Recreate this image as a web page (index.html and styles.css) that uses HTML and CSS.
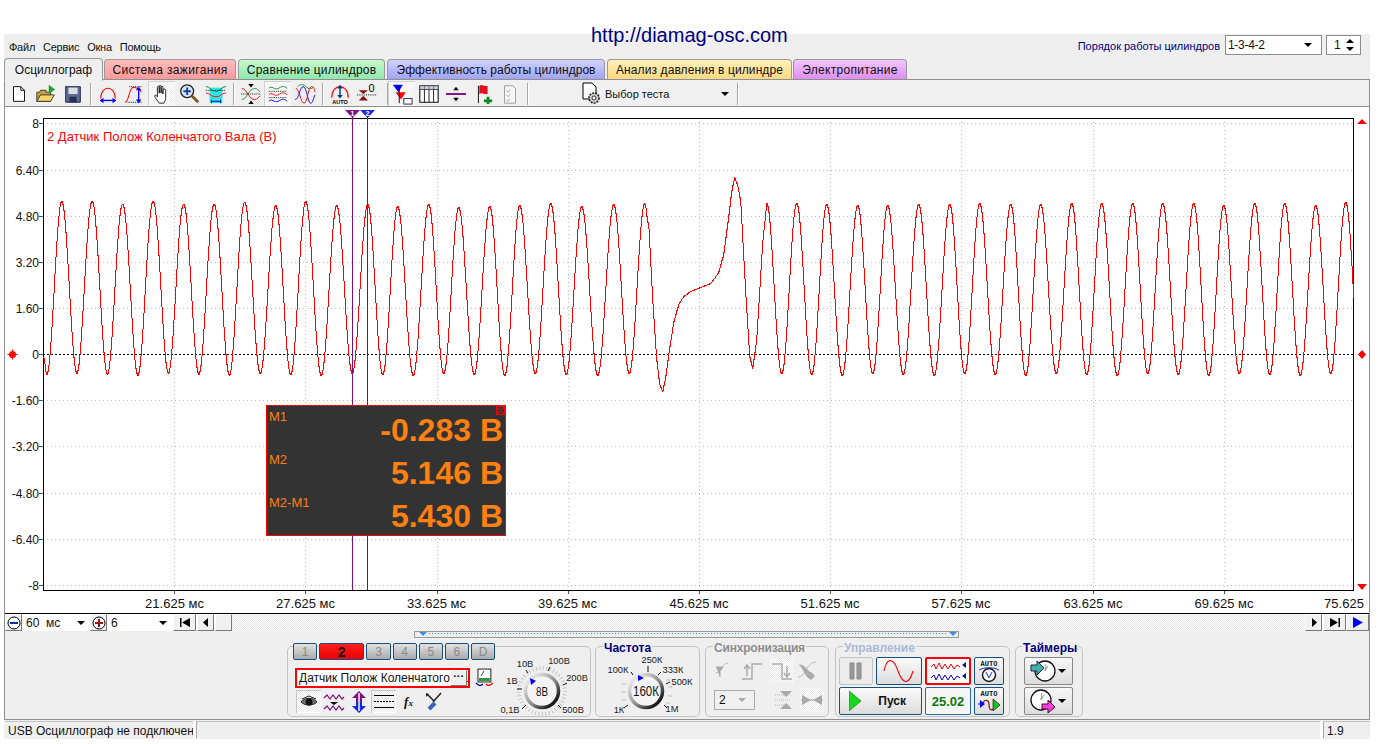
FILE: index.html
```html
<!DOCTYPE html>
<html lang="ru">
<head>
<meta charset="utf-8">
<title>Осциллограф</title>
<link rel="stylesheet" href="styles.css">
</head>
<body>
<div class="url">http://diamag-osc.com</div>
<div class="app">
  <div class="menubar">
    <span class="menu-item">Файл</span><span class="menu-item">Сервис</span><span class="menu-item">Окна</span><span class="menu-item">Помощь</span>
    <div class="order">
      <span class="order-label">Порядок работы цилиндров</span>
      <div class="combo order-combo"><span>1-3-4-2</span><i class="caret"></i></div>
      <div class="combo order-spin"><span>1</span><svg width="10" height="14" viewBox="0 0 10 14"><path d="M1 5l4-4 4 4zM1 9l4 4 4-4z" fill="#000"/></svg></div>
    </div>
  </div>
  <div class="tabs">
    <div class="tab active">Осциллограф</div>
    <div class="tab t-red">Система зажигания</div>
    <div class="tab t-green">Сравнение цилиндров</div>
    <div class="tab t-blue">Эффективность работы цилиндров</div>
    <div class="tab t-yellow">Анализ давления в цилиндре</div>
    <div class="tab t-purple">Электропитание</div>
  </div>
  <div class="page">
    <div class="toolbar">
      <div class="tool"><svg viewBox="0 0 24 24"><path d="M6 4h8l4 4v12H6z" fill="#fff" stroke="#000"/><path d="M14 4v4h4" fill="none" stroke="#000"/></svg></div>
      <div class="tool"><svg viewBox="0 0 24 24"><path d="M2 20V10h3l1-2h6v2h5v10z" fill="#c9a235" stroke="#333"/><path d="M2 20l4-7h15l-4 7z" fill="#f5d56a" stroke="#333"/><path d="M15 2l7 5-7 5z" fill="#1fa32c"/></svg></div>
      <div class="tool"><svg viewBox="0 0 24 24"><path d="M4 4h16v17H4z" fill="#5c6a9c" stroke="#1d2340"/><path d="M7 5h10v7H7z" fill="#ddd"/><path d="M8 15h8v6H8z" fill="#26304f"/></svg></div>
      <i class="sep"></i>
      <div class="tool"><svg viewBox="0 0 24 24"><path d="M4 17C4 2 20 2 20 17" fill="none" stroke="#f00" stroke-width="1.2"/><path d="M4 19h16" stroke="#00f" stroke-width="1.5"/><path d="M3 19l4-3v6zM21 19l-4-3v6z" fill="#00f"/></svg></div>
      <div class="tool"><svg viewBox="0 0 24 24"><path d="M1 21c5 0 4-16 9-16 3 0 7 1 9 5" fill="none" stroke="#f00" stroke-width="1.1"/><path d="M6 4h14M4 21h16" stroke="#000" stroke-dasharray="1 1"/><path d="M16 6v14" stroke="#00f" stroke-width="1.5"/><path d="M16 4l3 4h-6zM16 22l3-4h-6z" fill="#00f"/></svg></div>
      <div class="tool on"><svg viewBox="0 0 24 24"><path d="M9 22c-2-3-5-6-5-8 0-1 2-1 3 1V5c0-2 2-2 2 0v6V4c0-2 2-2 2 0v7V5c0-2 2-2 2 0v7V8c0-2 3-2 3 0v8c0 3-1 4-2 6z" fill="#fff" stroke="#000" stroke-width=".9"/></svg></div>
      <div class="tool"><svg viewBox="0 0 24 24"><circle cx="10" cy="9" r="7" fill="#dbe6f5" stroke="#222" stroke-width="1.4"/><path d="M10 5v8M6 9h8" stroke="#14409a" stroke-width="2"/><path d="M15 14l7 7" stroke="#7a5a20" stroke-width="3"/></svg></div>
      <div class="tool"><svg viewBox="0 0 24 24"><path d="M5 5h14v17H5z" fill="#2fe5e8"/><path d="M1 4c5 0 5 5 11 5s5-5 11-5" fill="none" stroke="#0a7a20"/><path d="M1 11c5 0 5 4 11 4s5-4 11-4" fill="none" stroke="#f00"/><path d="M1 8h22" stroke="#000" stroke-dasharray="1 1"/><path d="M7 20h10M7 18v4M17 18v4" stroke="#00a"/></svg></div>
      <i class="sep"></i>
      <div class="tool"><svg viewBox="0 0 24 24"><path d="M2 6c6 0 7 12 14 12 3 0 4-2 6-4" fill="none" stroke="#e00"/><path d="M2 18c6 0 7-12 14-12 3 0 4 2 6 4" fill="none" stroke="#1a9a30"/><path d="M1 12h22" stroke="#000" stroke-dasharray="1 1"/><path d="M9 1h6l-3 4zM9 23h6l-3-4z" fill="#000"/></svg></div>
      <div class="tool on"><svg viewBox="0 0 24 24"><path d="M2 6c3-4 6 2 10 0s6-4 10 0" fill="none" stroke="#0a8a20"/><path d="M2 13c3-4 6 2 10 0s6-4 10 0" fill="none" stroke="#f00"/><path d="M2 20c3-4 6 2 10 0s6-4 10 0" fill="none" stroke="#00f"/><path d="M2 9h20M2 16h20" stroke="#000" stroke-dasharray="1 1"/></svg></div>
      <div class="tool"><svg viewBox="0 0 24 24"><path d="M1 18C6 18 6 4 10 4s5 18 8 18 3-6 5-9" fill="none" stroke="#00f"/><path d="M2 6c4 0 5 16 9 16s4-18 8-18 3 4 4 6" fill="none" stroke="#f00"/><path d="M4 4c3-3 6-3 9 0s6 3 9 0" fill="none" stroke="#1a9a30"/></svg></div>
      <i class="sep"></i>
      <div class="tool"><svg viewBox="0 0 24 24"><path d="M3 16C3 0 21 0 21 16" fill="none" stroke="#f00" stroke-width="1.2"/><path d="M12 4v11" stroke="#00368a" stroke-width="1.5"/><path d="M12 2l3 4H9zM12 17l3-4H9z" fill="#00368a"/><text x="12" y="23" class="auto-mini">AUTO</text></svg></div>
      <div class="tool"><svg viewBox="0 0 24 24"><path d="M1 13h22" stroke="#000" stroke-dasharray="1 1"/><path d="M3 8h10l-5 4zM3 19h10l-5-5z" fill="#8a1010"/><text x="17" y="10" class="zero-mini">0</text></svg></div>
      <i class="sep sep-wide"></i>
      <div class="tool on"><svg viewBox="0 0 24 24"><path d="M2 2h11l-5 8z" fill="#00f"/><path d="M5 10h11l-5 8z" fill="#f00"/><path d="M9 3v19" stroke="#000"/><rect x="14" y="17" width="9" height="6" fill="#fff" stroke="#223"/></svg></div>
      <div class="tool"><svg viewBox="0 0 24 24"><path d="M2 3h20v18H2z" fill="#fff" stroke="#111" stroke-width="1.2"/><path d="M2 7h20M7 3v18M12 3v18M17 3v18" stroke="#111"/><path d="M2 3h20v4H2z" fill="#aab3c8" opacity=".6"/></svg></div>
      <div class="tool"><svg viewBox="0 0 24 24"><path d="M1 12h22" stroke="#80007f" stroke-width="2"/><path d="M9 8h6l-3-4zM9 16h6l-3 4z" fill="#000"/></svg></div>
      <div class="tool"><svg viewBox="0 0 24 24"><path d="M7 3v19" stroke="#000"/><path d="M8 3c3-2 5 1 9 0v9c-4 1-6-2-9 0z" fill="#e01020"/><path d="M16 15h3v3h3v3h-3v2h-3v-2h-3v-3h3z" fill="#0a8a20"/></svg></div>
      <div class="tool"><svg viewBox="0 0 24 24"><path d="M6 3h9l3 3v16H6z" fill="#f6f6f6" stroke="#999"/><path d="M8 8l2 2 2-3M8 13l2 2 2-3M8 18l2 2 2-3" fill="none" stroke="#aaa"/></svg></div>
      <i class="sep"></i>
      <div class="test-select">
        <svg width="24" height="24" viewBox="0 0 24 24"><path d="M3 1h9l4 4v12H3z" fill="#fff" stroke="#000"/><circle cx="14" cy="16" r="5" fill="#ccc" stroke="#222" stroke-dasharray="2 1" stroke-width="1.6"/><circle cx="14" cy="16" r="2" fill="#fff" stroke="#333"/></svg>
        <span class="test-label">Выбор теста</span><i class="caret"></i>
      </div>
      <i class="sep"></i>
    </div>
    <div class="plot">
      <svg class="scope" width="1364" height="506" viewBox="5 108 1364 506">
        <path class="grid" d="M43 124.5H1354M43 171.5H1354M43 217.5H1354M43 263.5H1354M43 309.5H1354M43 401.5H1354M43 447.5H1354M43 494.5H1354M43 540.5H1354M43 586.5H1354M174.5 119V591M305.5 119V591M437.5 119V591M568.5 119V591M699.5 119V591M830.5 119V591M961.5 119V591M1093.5 119V591M1224.5 119V591"/>
        <path class="zero" d="M43 355.5H1354"/>
        <rect class="frame" x="43.5" y="119.5" width="1310" height="472"/>
        <path class="ticks" d="M39 124.5h4M39 171.5h4M39 217.5h4M39 263.5h4M39 309.5h4M39 355.5h4M39 401.5h4M39 447.5h4M39 494.5h4M39 540.5h4M39 586.5h4M174.5 592v3M305.5 592v3M437.5 592v3M568.5 592v3M699.5 592v3M830.5 592v3M961.5 592v3M1093.5 592v3M1224.5 592v3"/>
        <g class="ylabels">
          <text x="39" y="129">8</text><text x="39" y="176">6.40</text><text x="39" y="222">4.80</text><text x="39" y="268">3.20</text><text x="39" y="314">1.60</text><text x="39" y="360">0</text><text x="39" y="406">-1.60</text><text x="39" y="452">-3.20</text><text x="39" y="499">-4.80</text><text x="39" y="545">-6.40</text><text x="39" y="591">-8</text>
        </g>
        <g class="xlabels">
          <text x="174.500" y="609">21.625 мс</text><text x="305.500" y="609">27.625 мс</text><text x="436.500" y="609">33.625 мс</text><text x="567.500" y="609">39.625 мс</text><text x="699" y="609">45.625 мс</text><text x="830" y="609">51.625 мс</text><text x="961" y="609">57.625 мс</text><text x="1093" y="609">63.625 мс</text><text x="1224" y="609">69.625 мс</text><text x="1344" y="609">75.625</text>
        </g>
        <text class="trace-title" x="47" y="142">2 Датчик Полож Коленчатого Вала (В)</text>
        <polyline id="trace" class="trace" points=""/>
        <path class="cursor-1" d="M352.5 118V591"/>
        <path class="cursor-2" d="M367.5 118V591"/>
        <path d="M345 111h15l-7.500 8z" fill="#80107f"/>
        <path d="M360 111h15l-7.500 8z" fill="#1a28d8"/>
        <text class="cursor-num" x="352.500" y="117">1</text>
        <text class="cursor-num" x="367.500" y="117">2</text>
        <path d="M1362 120l5 5h-10zM1362 591l5-6h-10zM1362 351l4 4.500-4 4.500-4-4.500z" fill="#f00"/>
        <circle cx="12.500" cy="355.500" r="3.500" fill="#f00"/>
        <path d="M12.500 350.500v10M7.500 355.500h10" stroke="#f00"/>
      </svg>
      <div class="readout">
        <svg class="readout-close" width="9" height="9" viewBox="0 0 9 9"><path d="M.5.500h8v8h-8zM.5.500l8 8M8.500.500l-8 8" fill="none" stroke="#f00"/></svg>
        <div class="readout-row"><span class="readout-key">M1</span><span class="readout-val">-0.283 В</span></div>
        <div class="readout-row"><span class="readout-key">M2</span><span class="readout-val">5.146 В</span></div>
        <div class="readout-row"><span class="readout-key">M2-M1</span><span class="readout-val">5.430 В</span></div>
      </div>
    </div>
    <div class="timebar">
      <div class="tbtn"><svg width="14" height="14" viewBox="0 0 14 14"><circle cx="7" cy="7" r="6" fill="#fff" stroke="#000"/><path d="M3 7h8" stroke="#00329a" stroke-width="2"/></svg></div>
      <div class="tcombo tcombo-a"><span>60&nbsp; мс</span><i class="caret"></i></div>
      <div class="tbtn"><svg width="14" height="14" viewBox="0 0 14 14"><circle cx="7" cy="7" r="6" fill="#fff" stroke="#000"/><path d="M3 7h8M7 3v8" stroke="#a01010" stroke-width="2"/></svg></div>
      <div class="tcombo tcombo-b"><span>6</span><i class="caret"></i></div>
      <div class="tbtn wide gap-l"><svg width="12" height="9" viewBox="0 0 12 9"><path d="M1 0h1.500v9H1zM11 0v9L3 4.500z" fill="#000"/></svg></div>
      <div class="tbtn gap-s"><svg width="6" height="9" viewBox="0 0 6 9"><path d="M5 0v9L0 4.500z" fill="#000"/></svg></div>
      <div class="tbtn gap-s"></div>
      <div class="dither"></div>
      <div class="tbtn"><svg width="6" height="9" viewBox="0 0 6 9"><path d="M1 0v9l5-4.500z" fill="#000"/></svg></div>
      <div class="tbtn wide gap-s"><svg width="12" height="9" viewBox="0 0 12 9"><path d="M1 0v9l8-4.500zM9.500 0H11v9H9.500z" fill="#000"/></svg></div>
      <div class="tbtn wide"><svg width="12" height="11" viewBox="0 0 12 11"><path d="M1 0v11l10-5.500z" fill="#00f"/></svg></div>
    </div>
    <div class="panel">
      <div class="splitter"><svg width="543" height="4" viewBox="0 0 543 4"><path d="M4 0h8l-4 4zM534 0h8l-4 4z" fill="#3a8fe8"/><path d="M14 1.500H532" stroke="#3a8fe8" stroke-dasharray="1 2"/></svg></div>
      <div class="groups">
        <section class="group g-channel">
          <div class="channel-col">
            <div class="channels">
              <span class="ch">1</span><span class="ch ch-on">2</span><span class="ch">3</span><span class="ch">4</span><span class="ch">5</span><span class="ch">6</span><span class="ch">D</span>
            </div>
            <div class="sensor-row">
              <div class="sensor"><span class="sensor-text">Датчик Полож Коленчатого Вала</span><span class="dots">···</span></div>
              <svg width="20" height="20" viewBox="0 0 20 20"><rect x="3" y="1" width="13" height="13" fill="#fff" stroke="#222"/><path d="M4 10h11v3H4z" fill="#2a9a40"/><path d="M6 8l3-5" stroke="#444"/><path d="M1 15c2 3 5 3 7 1" fill="none" stroke="#00a" stroke-width="1.300"/><path d="M18 15c-2 3-5 3-7 1" fill="none" stroke="#e00" stroke-width="1.300"/></svg>
            </div>
            <div class="mini-tools">
              <div class="mtool on"><svg viewBox="0 0 22 22"><path d="M3 11c4-5 12-5 16 0-4 4-12 4-16 0z" fill="#777" stroke="#222"/><circle cx="11" cy="11" r="3.500" fill="#111"/><path d="M4 8l7-3 7 3" fill="none" stroke="#222"/></svg></div>
              <div class="mtool"><svg viewBox="0 0 22 22"><path d="M1 7l3-3 3 4 3-4 3 4 3-4 3 4 2-2" fill="none" stroke="#80107f" stroke-width="1.200"/><path d="M7 11h8l-4 3z" fill="#000"/><path d="M1 18l3-3 3 4 3-4 3 4 3-4 3 4 2-2" fill="none" stroke="#80107f" stroke-width="1.200"/></svg></div>
              <div class="mtool"><svg viewBox="0 0 22 22"><path d="M11 0l7 7h-4v4H8V7H4z" fill="#80107f"/><path d="M11 22l7-7h-4v-4H8v4H4z" fill="#1428e0"/><path d="M10 2h2v18h-2z" fill="#fff" opacity=".7"/></svg></div>
              <div class="mtool on"><svg viewBox="0 0 22 22"><path d="M1 4.500h20M1 16.500h20" stroke="#000"/><path d="M1 10.500h20" stroke="#000" stroke-dasharray="2 1"/></svg></div>
              <div class="mtool"><span class="fx">f<small>x</small></span></div>
              <div class="mtool"><svg viewBox="0 0 22 22"><path d="M4 3l7 7M18 2l-8 9" stroke="#222" stroke-width="1.500"/><path d="M12 12l-6 6" stroke="#3a62b8" stroke-width="4"/><path d="M3 2l3 1-3 3z" fill="#222"/></svg></div>
            </div>
          </div>
          <svg class="knob knob-v" width="95" height="62" viewBox="495 655 95 62">
            <defs><linearGradient id="ring" x1="0" y1="0" x2="1" y2="1"><stop offset=".15" stop-color="#e4e4e4"/><stop offset=".55" stop-color="#8a8a8a"/><stop offset=".85" stop-color="#1a1a1a"/></linearGradient></defs>
            <circle cx="542" cy="692" r="23" fill="none" stroke="#c4c4c4" stroke-width="4" stroke-dasharray="1 2.500"/>
            <circle cx="542" cy="692" r="16.500" fill="#f4f4f4" stroke="url(#ring)" stroke-width="3.500"/>
            <path d="M526 706l-4 4M522 690h-5M528 674l-2-3M548 672l2-4M563 686l4-2M558 706l3 3" stroke="#111"/>
            <path d="M530 679l6 3-5 4z" fill="#00f"/>
            <text class="k-center" x="542" y="697" textLength="12" lengthAdjust="spacingAndGlyphs">8В</text>
            <text class="k-label" x="525" y="668">10В</text><text class="k-label" x="559" y="665">100В</text><text class="k-label" x="512" y="685">1В</text><text class="k-label" x="577" y="682">200В</text><text class="k-label" x="510" y="714">0,1В</text><text class="k-label" x="573" y="714">500В</text>
          </svg>
        </section>
        <section class="group g-freq">
          <span class="legend navy">Частота</span>
          <svg class="knob knob-f" width="103" height="62" viewBox="596 655 103 62">
            <defs><linearGradient id="ring2" x1="0" y1="0" x2="1" y2="1"><stop offset=".15" stop-color="#e4e4e4"/><stop offset=".55" stop-color="#8a8a8a"/><stop offset=".85" stop-color="#1a1a1a"/></linearGradient></defs>
            <path d="M622 685h4M621 693h5M622 701h4M666 681h4M668 688h4M668 697h4M666 704h4" stroke="#bbb"/>
            <circle cx="646" cy="692" r="16.500" fill="#f4f4f4" stroke="url(#ring2)" stroke-width="3.500"/>
            <path d="M628 706l-4 3M633 676l-2-3M648 673v-6M658 676l3-3M666 685l4-2M664 706l3 3" stroke="#111"/>
            <path d="M638 676l6 3-6 3z" fill="#00f"/>
            <text class="k-center large" x="646" y="697" textLength="26" lengthAdjust="spacingAndGlyphs">160К</text>
            <text class="k-label" x="652" y="664">250К</text><text class="k-label" x="618" y="674">100К</text><text class="k-label" x="673" y="674">333К</text><text class="k-label" x="682" y="686">500К</text><text class="k-label" x="619" y="714">1К</text><text class="k-label" x="672" y="713">1М</text>
          </svg>
        </section>
        <section class="group g-sync">
          <span class="legend gray">Синхронизация</span>
          <div class="sync-grid">
            <div class="stool"><svg viewBox="0 0 24 24"><path d="M2 14c6 0 6-10 12-10" fill="none" stroke="#bbb"/><path d="M2 8h7l-3 4v6" fill="#aaa" stroke="#aaa"/></svg></div>
            <div class="stool"><svg viewBox="0 0 24 24"><path d="M2 20h10V5h10" fill="none" stroke="#aaa" stroke-width="1.400"/><path d="M7 7v10M4 10l3-4 3 4" fill="none" stroke="#aaa" stroke-width="1.400"/></svg></div>
            <div class="stool on"><svg viewBox="0 0 24 24"><path d="M2 5h10v15h10" fill="none" stroke="#aaa" stroke-width="1.400"/><path d="M17 7v10M14 14l3 4 3-4" fill="none" stroke="#aaa" stroke-width="1.400"/></svg></div>
            <div class="stool"><svg viewBox="0 0 24 24"><path d="M2 18C10 18 10 3 20 3" fill="none" stroke="#bbb"/><path d="M3 5c8 2 9 8 12 8l4 4-4 4c-3-2-6-5-7-8z" fill="#aaa"/></svg></div>
          </div>
          <div class="sync-row">
            <div class="combo sync-combo"><span>2</span><i class="caret caret-gray"></i></div>
            <div class="stool"><svg viewBox="0 0 24 24"><path d="M3 7h16M3 12h16M3 17h16" stroke="#bbb" stroke-dasharray="1 1"/><path d="M8 3h12l-6 6zM8 21h12l-6-6z" fill="#aaa"/></svg></div>
            <div class="stool on"><svg viewBox="0 0 24 24"><path d="M2 7l9 5-9 5zM22 7l-9 5 9 5z" fill="#aaa"/><path d="M1 12h22" stroke="#aaa"/></svg></div>
          </div>
        </section>
        <section class="group g-ctrl">
          <span class="legend faint">Управление</span>
          <div class="ctrl-grid">
            <div class="cbtn off"><svg width="14" height="18" viewBox="0 0 14 18"><path d="M1 1h4v16H1zM8 1h4v16H8z" fill="#999" stroke="#888"/></svg></div>
            <div class="cbtn"><svg width="32" height="22" viewBox="0 0 32 22"><path d="M1 11C4-3 10-3 15 11s11 14 15 0" fill="none" stroke="#f00" stroke-width="1.100"/></svg></div>
            <div class="cbtn red"><svg width="36" height="22" viewBox="0 0 36 22"><path d="M1 7l3-3 2 5 3-6 3 6 3-5 3 5 3-5 3 5 3-4 3 2" fill="none" stroke="#e00"/><path d="M1 18l3-3 2 5 3-6 3 6 3-5 3 5 3-5 3 5 3-4 3 2" fill="none" stroke="#00c"/><path d="M36 2v6l-4-3zM36 13v6l-4-3z" fill="#002080"/></svg></div>
            <div class="cbtn"><svg width="24" height="24" viewBox="0 0 24 24"><text class="auto" x="12" y="7">AUTO</text><circle cx="12" cy="16" r="6.500" fill="#fff" stroke="#111" stroke-width="1.400"/><path d="M2 11c5-3 15-3 20 0" fill="none" stroke="#1030d0"/><path d="M9 13l3 6 3-6" fill="none" stroke="#1030d0"/></svg></div>
            <div class="cbtn pusk"><svg width="12" height="20" viewBox="0 0 12 20"><path d="M0 0l12 10L0 20z" fill="#19d81c" stroke="#2a9a2a"/></svg><span>Пуск</span></div>
            <div class="cbtn fps">25.02</div>
            <div class="cbtn"><svg width="24" height="24" viewBox="0 0 24 24"><text class="auto" x="12" y="7">AUTO</text><path d="M6 16c0-6 6-6 6-1s1 7 5 5" fill="none" stroke="#902020" stroke-width="1.300"/><path d="M1 15h6" stroke="#00f"/><path d="M3 11l5 4-5 4z" fill="#00f"/><path d="M16 10l7 6-7 6z" fill="#19c81c" stroke="#000" stroke-width=".6"/></svg></div>
          </div>
        </section>
        <section class="group g-timer">
          <span class="legend navy">Таймеры</span>
          <div class="cbtn tim"><svg width="26" height="24" viewBox="0 0 26 24"><circle cx="15" cy="12" r="10" fill="#fff" stroke="#111" stroke-width="1.300"/><path d="M15 12l1-7M15 12l3-5" stroke="#999"/><path d="M1 6h6V2l7 7-7 7v-4H1z" fill="#40b0a8" stroke="#225"/></svg><i class="caret"></i></div>
          <div class="cbtn tim"><svg width="26" height="24" viewBox="0 0 26 24"><circle cx="11" cy="11" r="10" fill="#fff" stroke="#111" stroke-width="1.300"/><path d="M11 11l1-7M11 11l3-5" stroke="#999"/><path d="M12 15h6v-4l7 7-7 6v-4h-6z" fill="#f040e0" stroke="#502"/></svg><i class="caret"></i></div>
        </section>
      </div>
    </div>
  </div>
  <div class="status">
    <div class="sb sb-1">USB Осциллограф не подключен</div>
    <div class="sb sb-2"></div>
    <div class="sb sb-3">1.9</div>
  </div>
</div>
<script src="app.js"></script>
</body>
</html>
```
FILE: styles.css
```css
* { box-sizing: border-box; }
html, body { margin: 0; padding: 0; background: #fff; }
body { width: 1382px; height: 744px; overflow: hidden; position: relative; font: 11px "Liberation Sans", Arial, sans-serif; color: #111; }
svg { display: block; }
i { display: block; font-style: normal; }

.url { position: absolute; left: 591px; top: 23px; font-size: 20px; line-height: 24px; color: #00007f; z-index: 3; }

.app { margin: 34px 0 0 4px; width: 1366px; height: 705px; background: #efefef; }

.menubar { height: 24px; display: flex; align-items: center; padding: 0 9px 0 5px; gap: 8px; }
.menu-item { font-size: 11px; padding-top: 2px; letter-spacing: -.25px; }
.order { margin-left: auto; display: flex; align-items: center; height: 20px; margin-top: -2px; }
.order-label { color: #00007f; font-size: 11px; margin-right: 5px; padding-top: 1px; }
.combo { background: #fff; border: 1px solid #8c8c8c; display: flex; align-items: center; justify-content: space-between; height: 20px; }
.order-combo { width: 97px; padding: 0 9px 0 2px; font-size: 12px; margin-right: 4px; letter-spacing: -.3px; }
.order-spin { width: 35px; padding: 0 5px 0 7px; font-size: 12px; }
.caret { width: 0; height: 0; border-left: 4px solid transparent; border-right: 4px solid transparent; border-top: 4px solid #000; }
.caret-gray { border-top-color: #aaa; }

.tabs { height: 22px; display: flex; align-items: flex-end; gap: 1px; position: relative; z-index: 2; margin-bottom: -1px; }
.tab { height: 21px; border: 1px solid #999; border-bottom: 1px solid #8f8f8f; border-radius: 4px 4px 0 0; font-size: 12px; line-height: 21px; text-align: center; }
.tab.active { height: 23px; width: 99px; background: #efefef; border-bottom-color: #efefef; line-height: 22px; margin-bottom: -1px; }
.t-red { width: 132px; letter-spacing: .35px; background: linear-gradient(#ffbcbc, #ff9a9a); }
.t-green { width: 147px; letter-spacing: .2px; margin-left: 1px; background: linear-gradient(#c8f8cc, #8fe8ae); }
.t-blue { width: 218px; letter-spacing: .03px; margin-left: 1px; background: linear-gradient(#d0d2ff, #a0a4f6); }
.t-yellow { width: 185px; letter-spacing: .1px; margin-left: 1px; background: linear-gradient(#fff0b8, #fad985); }
.t-purple { width: 114px; letter-spacing: .3px; background: linear-gradient(#f2c6ff, #de8ef0); }

.page { width: 1366px; height: 641px; border: 1px solid #8f8f8f; }
.toolbar { height: 27px; border-bottom: 1px solid #8f8f8f; display: flex; align-items: center; background: #f0f0f0; padding-top: 1px; }
.tool { width: 27px; height: 25px; display: flex; align-items: center; justify-content: center; flex: none; }
.tool svg { width: 22px; height: 22px; }
.tool.on { background: repeating-conic-gradient(#fff 0 25%, #f0f0f0 0 50%) 0 0 / 2px 2px; box-shadow: inset 1px 1px #d0d0d0; }
.sep { width: 1px; height: 22px; background: #a8a8a8; margin: 0 3px 0 4px; box-shadow: 1px 0 #fff; flex: none; }
.sep-wide { margin: 0 0 0 7px; }
.auto-mini { font: bold 6px "Liberation Sans", sans-serif; text-anchor: middle; }
.zero-mini { font: 12px "Liberation Sans", sans-serif; text-anchor: middle; }
.test-select { width: 202px; height: 25px; display: flex; align-items: center; padding-left: 49px; flex: none; }
.test-select svg { margin-right: 1px; }
.test-label { font-size: 11px; width: 116px; padding-top: 1px; }

.plot { position: relative; height: 506px; background: #fff; }
.scope { position: absolute; left: 0; top: 0; }
.grid { stroke: #bdbdbd; fill: none; stroke-dasharray: 1 3; shape-rendering: crispEdges; }
.zero { stroke: #000; fill: none; stroke-dasharray: 2 2; shape-rendering: crispEdges; }
.frame { fill: none; stroke: #000; shape-rendering: crispEdges; }
.ticks { stroke: #555; shape-rendering: crispEdges; }
.ylabels text { font-size: 12px; text-anchor: end; fill: #111; }
.xlabels text { font-size: 13px; text-anchor: middle; fill: #111; }
.trace-title { font-size: 13px; fill: #f00; }
.trace { fill: none; stroke: #f00; stroke-width: 1; shape-rendering: crispEdges; }
.cursor-1 { stroke: #80107f; shape-rendering: crispEdges; }
.cursor-2 { stroke: #1a28d8; shape-rendering: crispEdges; }
.cursor-num { font: bold 7px "Liberation Sans", sans-serif; fill: #fff; text-anchor: middle; }

.readout { position: absolute; left: 261px; top: 298px; width: 240px; height: 131px; background: #333; border: 1px solid #f00; color: #ff7f0f; padding: 0 2px; }
.readout-close { position: absolute; right: 0; top: 0; }
.readout-row { height: 43px; position: relative; text-align: right; }
.readout-key { position: absolute; left: 0; top: 3px; font-size: 13px; }
.readout-val { font-size: 32px; font-weight: bold; line-height: 48px; }

.timebar { height: 18px; border-top: 1px solid #000; display: flex; background: #fff; }
.tbtn { width: 17px; height: 17px; background: #f0f0f0; border: 1px solid; border-color: #fff #777 #777 #fff; display: flex; align-items: center; justify-content: center; flex: none; }
.tbtn.wide { width: 23px; }
.gap-l { margin-left: 1px; }
.gap-s { margin-left: 1px; }
.tcombo { height: 17px; display: flex; align-items: center; justify-content: space-between; font-size: 12px; padding: 1px 5px 0 4px; }
.tcombo .caret { margin-top: -1px; }
.tcombo-a { width: 68px; }
.tcombo-b { width: 65px; }
.dither { flex: 1; background: repeating-conic-gradient(#fff 0 25%, #e6e6e6 0 50%) 0 0 / 2px 2px; }

.panel { height: 88px; background: #efefef; }
.splitter { width: 545px; height: 7px; margin: 0 0 0 409px; border: 1px solid #9a9a9a; }
.groups { display: flex; margin: 8px 0 0 282px; height: 71px; }
.group { position: relative; height: 71px; border: 1px solid #c4c4c4; border-radius: 5px; flex: none; }
.legend { position: absolute; top: -5px; left: 7px; background: #efefef; font-weight: bold; font-size: 12px; line-height: 12px; padding: 0 1px; white-space: nowrap; }
.navy { color: #00007f; }
.gray { color: #8e8e8e; letter-spacing: -.2px; }
.faint { color: #a9bbd8; }

.g-channel { width: 304px; display: flex; align-items: flex-start; }
.channel-col { width: 207px; margin-top: -4px; padding-left: 5px; flex: none; }
.channels { display: flex; gap: 2px; height: 17px; }
.ch { width: 25px; height: 17px; background: linear-gradient(#e2e2e2, #aaa); border: 1px solid #17507e; border-radius: 2px; color: #8a8a8a; font-size: 12px; line-height: 16px; text-align: center; }
.ch-on { width: 47px; background: linear-gradient(#ff2020, #e80000); color: #111; font-weight: bold; font-size: 14px; }
.sensor-row { display: flex; align-items: center; gap: 5px; margin: 8px 0 0 2px; }
.sensor { width: 177px; height: 20px; background: #fff; border: 2px solid #f00; display: flex; align-items: center; position: relative; overflow: hidden; padding-left: 2px; }
.sensor-text { font-size: 12px; white-space: nowrap; }
.dots { position: absolute; right: 1px; top: 0; width: 17px; height: 16px; background: #efefef; border: 1px solid; border-color: #fff #777 #777 #fff; font-weight: bold; font-size: 11px; line-height: 11px; text-align: center; }
.mini-tools { display: flex; margin: 2px 0 0 3px; }
.mtool { width: 25px; height: 23px; display: flex; align-items: center; justify-content: center; }
.mtool svg { width: 22px; height: 22px; }
.mtool.on { background: repeating-conic-gradient(#fff 0 25%, #eaeaea 0 50%) 0 0 / 2px 2px; box-shadow: inset 1px 1px #c8c8c8, inset -1px -1px #fff; }
.fx { font: italic bold 13px "Liberation Serif", serif; }
.fx small { font-size: 9px; }
.knob { margin-top: 7px; flex: none; }
.knob text { font-family: "Liberation Sans", sans-serif; }
.k-label { font-size: 9.300px; text-anchor: middle; fill: #222; }
.k-center { font-size: 13px; text-anchor: middle; fill: #111; }
.k-center.large { font-size: 15px; }

.g-freq { width: 105px; margin-left: 4px; }
.g-sync { width: 124px; margin-left: 5px; }
.sync-grid { display: grid; grid-template-columns: 26px 30px 26px 28px; margin: 12px 0 0 8px; height: 24px; }
.stool { width: 24px; height: 24px; }
.stool svg { width: 24px; height: 24px; }
.stool.on { background: repeating-conic-gradient(#fff 0 25%, #eaeaea 0 50%) 0 0 / 2px 2px; }
.sync-row { display: flex; align-items: center; margin: 6px 0 0 8px; height: 22px; }
.sync-combo { width: 47px; padding: 0 8px 0 4px; font-size: 12px; margin-right: 17px; background: #f0f0f0; border-color: #aaa; }
.sync-row .stool { margin-right: 4px; }

.g-ctrl { width: 175px; margin-left: 6px; padding: 10px 0 0 3px; }
.ctrl-grid { display: grid; grid-template-columns: 34px 46px 46px 30px; grid-template-rows: 28px 28px; column-gap: 3px; row-gap: 2px; }
.cbtn { background: linear-gradient(#fbfbfb, #dcdcdc); border: 1px solid #17507e; border-radius: 2px; display: flex; align-items: center; justify-content: center; }
.cbtn.off { border-color: #c4c4c4; background: #ececec; }
.cbtn.red { border: 2px solid #f00; background: #fafafa; }
.pusk { grid-column: span 2; justify-content: space-between; padding: 0 15px 0 9px; font-weight: bold; font-size: 12px; }
.fps { font: bold 13px "Liberation Sans", sans-serif; color: #0a7a0a; background: #f6f6f6; border-color: #2a6aa8; }
.auto { font: bold 7px "Liberation Mono", monospace; text-anchor: middle; fill: #111; }

.g-timer { width: 68px; margin-left: 5px; padding: 10px 0 0 8px; }
.g-timer .legend { left: 6px; }
.tim { width: 49px; height: 28px; margin-bottom: 2px; justify-content: space-between; padding: 0 6px 0 5px; border-color: #888; background: linear-gradient(#f8f8f8, #dcdcdc); }

.status { display: flex; height: 17px; margin-top: 1px; padding-left: 1px; background: #efefef; }
.sb { height: 17px; border-top: 1px solid #c4c4c4; font-size: 12px; line-height: 18px; padding-left: 3px; white-space: nowrap; }
.sb-1 { width: 188px; }
.sb-2 { width: 1126px; margin-left: 3px; border-left: 1px solid #a8a8a8; box-shadow: -3px 0 #fff; }
.sb-3 { width: 47px; margin-left: 3px; border-left: 1px solid #a8a8a8; box-shadow: -3px 0 #fff; }
```
FILE: app.js
```js
// Waveform extrema of the captured signal: peak positions and their heights.
var first = [[61,202],[91.5,202],[122,205],[152.5,202],[183,205],[213.5,205],[244,203],[275,206],[305,202],[336,206],[367,205],[397,207],[428,205],[458,208],[489,207],[519,206],[550,204],[581,207],[613,205],[644,204]];
var last = [[766,204],[796,204],[826,205],[857,206],[887,206],[918,205],[949,205],[979,204],[1010,205],[1040,205],[1071,204],[1101,204],[1132,204],[1162,204],[1193,204],[1223,206],[1254,204],[1284,204],[1315,206],[1345,203]];
// Hand-read curve of the irregular tooth between the two runs.
var gap = [[648,225],[652,300],[656,360],[659,385],[662,392],[665,378],[668,355],[673,323],[678,305],[683,297],[690,292],[700,288],[710,284],[718,273],[723,255],[728,217],[731,192],[734,178],[737,186],[740,202],[745,293],[749,357],[752,369],[756,340],[762,243],[766,204]];

function cosSeg(a, b, out) {
  for (var x = a[0]; x < b[0]; x += 0.5) {
    var t = (x - a[0]) / (b[0] - a[0]);
    out.push([x, a[1] + (b[1] - a[1]) * (1 - Math.cos(Math.PI * t)) / 2]);
  }
}
function run(peaks, out, startMin) {
  var prev = startMin;
  peaks.forEach(function (p, i) {
    if (prev) cosSeg(prev, p, out);
    var next = peaks[i + 1];
    if (next) {
      var m = [(p[0] + next[0]) / 2, 374 + (i % 3)];
      cosSeg(p, m, out);
      prev = m;
    }
  });
}
var pts = [];
cosSeg([43, 358], [46, 375], pts);
run(first, pts, [46, 375]);
cosSeg([644, 204], [648, 225], pts);
for (var i = 0; i < gap.length - 1; i++) {
  var a = gap[i], b = gap[i + 1];
  for (var x = a[0]; x < b[0]; x += 0.5) {
    pts.push([x, a[1] + (b[1] - a[1]) * (x - a[0]) / (b[0] - a[0])]);
  }
}
run(last, pts, null);
cosSeg([1345, 203], [1360, 375], pts);

var line = [];
pts.forEach(function (p) {
  if (p[0] <= 1353) line.push(Math.round(p[0]) + 0.5 + ',' + (Math.round(p[1]) + 0.5));
});
document.getElementById('trace').setAttribute('points', line.join(' '));
```
